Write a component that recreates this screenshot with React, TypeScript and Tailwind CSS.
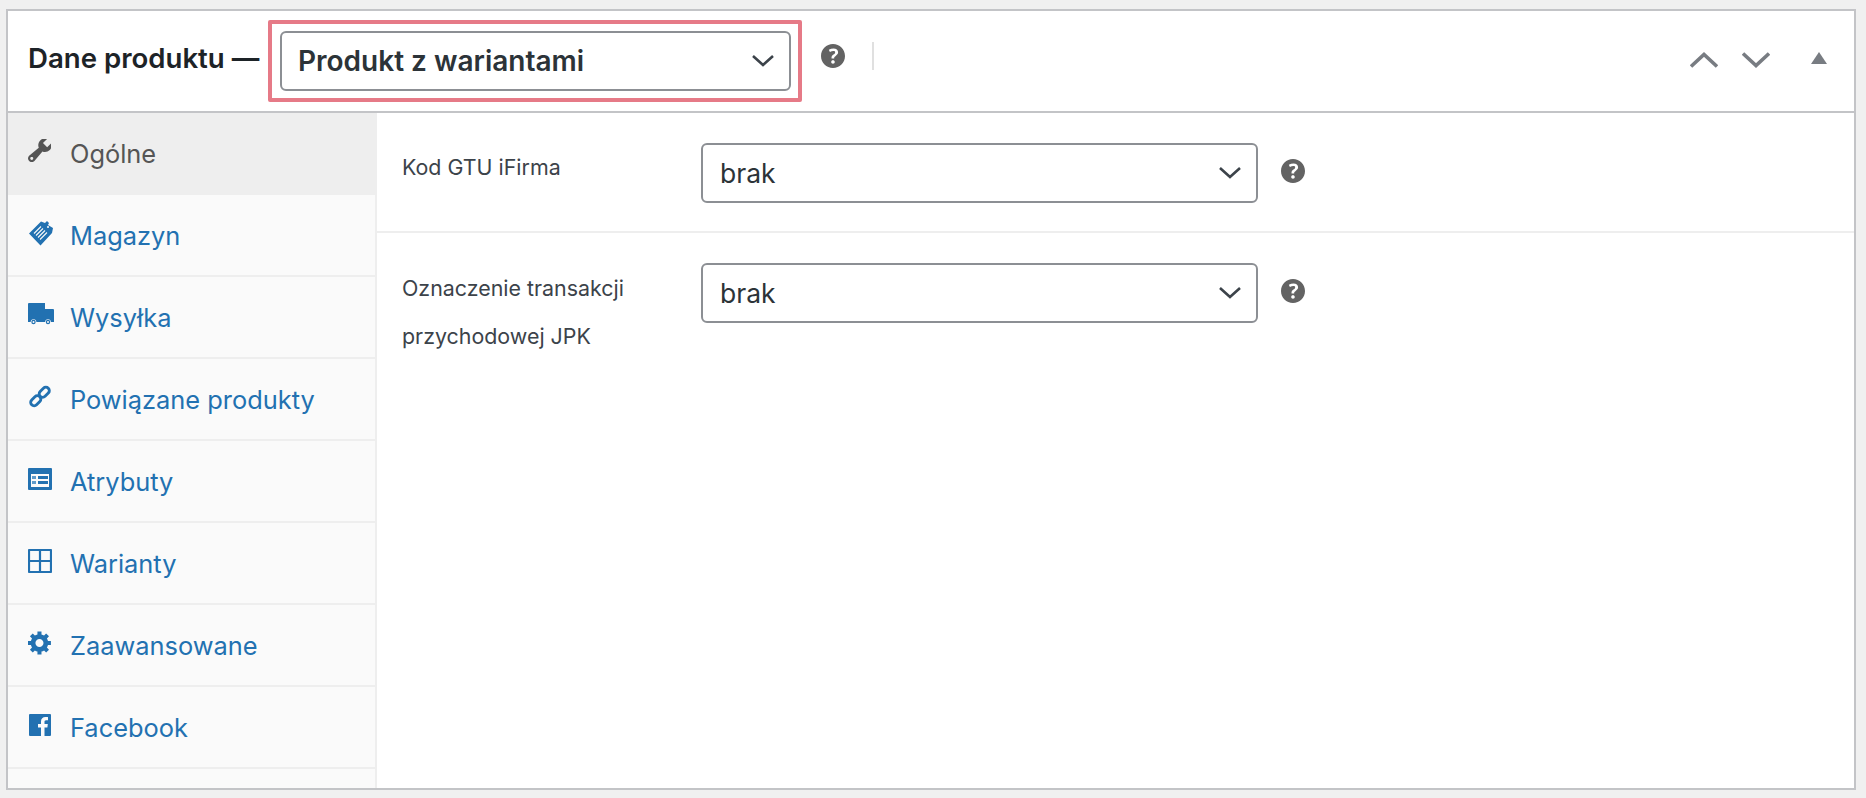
import React from "react";

const font = { fontFamily: "Inter, 'Noto Sans', sans-serif" };

function HelpIcon({ className = "" }: { className?: string }) {
  return (
    <svg viewBox="3 3 14 14" className={`w-[24px] h-[24px] ${className}`} fill="#636363">
      <path d="M17 10c0-3.87-3.14-7-7-7-3.87 0-7 3.13-7 7s3.13 7 7 7c3.86 0 7-3.13 7-7zm-6.3 1.48H9.14v-.43c0-.38.08-.7.24-.98s.46-.57.88-.89c.41-.29.68-.53.81-.71.14-.18.2-.39.2-.62 0-.25-.09-.44-.28-.58-.19-.13-.45-.19-.79-.19-.58 0-1.25.19-2 .57l-.64-1.28c.87-.49 1.8-.74 2.77-.74.81 0 1.45.2 1.92.58.48.39.71.91.71 1.55 0 .43-.09.8-.29 1.11-.19.32-.57.67-1.11 1.06-.38.28-.61.49-.71.63-.1.15-.15.34-.15.57v.35zm-1.47 2.74c-.18-.18-.27-.42-.27-.73 0-.33.08-.58.26-.75s.43-.25.77-.25c.32 0 .57.09.75.26s.27.42.27.74c0 .3-.09.54-.27.72-.18.18-.43.27-.75.27-.33 0-.58-.09-.76-.26z" />
    </svg>
  );
}

function Chevron({ up = false, color = "#50575e", w = 22, h = 13, sw = 2.6 }: { up?: boolean; color?: string; w?: number; h?: number; sw?: number }) {
  return (
    <svg width={w} height={h} viewBox={`0 0 ${w} ${h}`} fill="none" stroke={color} strokeWidth={sw}>
      {up ? (
        <path d={`M1 ${h - 1.5} L${w / 2} 2.5 L${w - 1} ${h - 1.5}`} />
      ) : (
        <path d={`M1 1.5 L${w / 2} ${h - 2.5} L${w - 1} 1.5`} />
      )}
    </svg>
  );
}

function Select({ value, bold = false }: { value: string; bold?: boolean }) {
  return (
    <div className="relative w-full h-full">
      <select
        defaultValue={value}
        style={font}
        className={`appearance-none w-full h-full bg-white border-2 border-[#8c8f94] rounded-[6px] text-[#2c3338] outline-none ${
          bold ? "font-semibold text-[28px] pb-[1px] pl-[16px]" : "text-[26.5px] pl-[17px] pt-[1px]"
        }`}
      >
        <option>{value}</option>
      </select>
      <div className="absolute right-[17px] top-1/2 -translate-y-1/2 pointer-events-none flex">
        <Chevron w={22} h={13} sw={2.6} color="#3c434a" />
      </div>
    </div>
  );
}

const icons: Record<string, React.ReactNode> = {
  wrench: (
    <svg width="23" height="23" viewBox="2 2.4 15.5 15.5" fill="currentColor">
      <path d="M16.68 9.77c-1.34 1.34-3.3 1.67-4.95.99l-5.41 6.52c-.99.99-2.59.99-3.58 0s-.99-2.59 0-3.57l6.52-5.42c-.68-1.65-.35-3.61.99-4.95 1.28-1.28 3.12-1.62 4.72-1.06l-2.89 2.89 2.82 2.82 2.86-2.87c.53 1.58.18 3.39-1.08 4.67zM3.81 16.21c.4.39 1.04.39 1.43 0 .4-.4.4-1.04 0-1.43-.39-.4-1.03-.4-1.43 0-.39.39-.39 1.03 0 1.43z" />
    </svg>
  ),
  tag: (
    <svg width="26" height="26" viewBox="0 0 26 26">
      <path fill="currentColor" d="M1 13.5 L13 1.5 L17 3 L19 1 L21 3 L20 5 L25 8 L24 13 L12.5 25.5 Z" />
      <g stroke="#fafafa" strokeWidth="1.1">
        <path d="M6 13.5 L13 6.5" />
        <path d="M8 15.5 L15 8.5" />
        <path d="M10 17.5 L17 10.5" />
        <path d="M12 19.5 L19 12.5" />
      </g>
      <circle cx="20" cy="7" r="1" fill="#fafafa" />
    </svg>
  ),
  truck: (
    <svg width="26" height="23" viewBox="0 0 26 23">
      <path fill="currentColor" d="M0 1 a1 1 0 0 1 1-1 H17 V6 H25 a1 1 0 0 1 1 1 V19 H0 Z" />
      <circle cx="5.5" cy="19" r="2.8" fill="#fafafa" />
      <circle cx="20" cy="19" r="2.8" fill="#fafafa" />
      <circle cx="5.5" cy="19" r="2.2" fill="currentColor" />
      <circle cx="5.5" cy="19" r="1" fill="#fafafa" />
      <circle cx="20" cy="19" r="2.2" fill="currentColor" />
      <circle cx="20" cy="19" r="1" fill="#fafafa" />
    </svg>
  ),
  link: (
    <svg width="24" height="23" viewBox="0 0 24 24" fill="none" stroke="currentColor" strokeWidth="3">
      <rect x="-6.6" y="-3.6" width="12" height="7.2" rx="3.6" transform="translate(8 16) rotate(-45)" />
      <rect x="-5.4" y="-3.6" width="12" height="7.2" rx="3.6" transform="translate(16 8) rotate(-45)" />
    </svg>
  ),
  attrs: (
    <svg width="24" height="22" viewBox="0 0 24 22">
      <rect width="24" height="22" rx="1" fill="currentColor" />
      <rect x="3" y="6" width="18" height="13" fill="#fafafa" />
      <rect x="4" y="8" width="4" height="3" fill="#5f9bcb" />
      <rect x="4" y="13" width="4" height="3" fill="#5f9bcb" />
      <rect x="10" y="8" width="10" height="3" fill="currentColor" />
      <rect x="10" y="13" width="10" height="3" fill="currentColor" />
    </svg>
  ),
  grid: (
    <svg width="24" height="24" viewBox="0 0 24 24" fill="none" stroke="currentColor" strokeWidth="2.2">
      <rect x="1" y="1" width="22" height="22" rx="0.5" />
      <path d="M12 1 V23 M1 12 H23" />
    </svg>
  ),
  gear: (
    <svg width="24" height="24" viewBox="1 1.6 17.8 17.8" fill="currentColor">
      <path d="M18 12h-2.18c-.17.7-.44 1.35-.81 1.93l1.54 1.54-2.1 2.1-1.54-1.54c-.58.36-1.23.63-1.91.79V19H8v-2.18c-.68-.16-1.33-.43-1.91-.79l-1.54 1.54-2.12-2.12 1.54-1.54c-.36-.58-.63-1.23-.79-1.91H1V9.03h2.17c.16-.7.44-1.35.8-1.94L2.43 5.55l2.1-2.1 1.54 1.54c.58-.37 1.24-.64 1.93-.81V2h3v2.18c.68.16 1.33.43 1.91.79l1.54-1.54 2.12 2.12-1.54 1.54c.36.59.64 1.24.8 1.94H18V12zm-8.5 1.5c1.66 0 3-1.34 3-3s-1.34-3-3-3-3 1.34-3 3 1.34 3 3 3z" />
    </svg>
  ),
  fb: (
    <svg width="22" height="22" viewBox="0 0 22 22" className="ml-[1px]">
      <path fill="currentColor" d="M1 0 H21 a1 1 0 0 1 1 1 V21 a1 1 0 0 1-1 1 H15.5 V13.5 H18.4 L18.8 10 H15.5 V8 c0-1 .3-1.7 1.7-1.7 H19 V3.2 c-.4 0-1.4-.1-2.6-.1 -2.6 0-4.4 1.6-4.4 4.5 V10 H9 V13.5 H12 V22 H1 a1 1 0 0 1-1-1 V1 a1 1 0 0 1 1-1 Z" />
    </svg>
  ),
};

const tabs = [
  { label: "Ogólne", icon: "wrench", active: true },
  { label: "Magazyn", icon: "tag" },
  { label: "Wysyłka", icon: "truck" },
  { label: "Powiązane produkty", icon: "link" },
  { label: "Atrybuty", icon: "attrs" },
  { label: "Warianty", icon: "grid" },
  { label: "Zaawansowane", icon: "gear" },
  { label: "Facebook", icon: "fb" },
];

export default function App() {
  return (
    <div className="w-[1866px] h-[798px] bg-[#f0f0f0] pt-[9px] pl-[6px] pr-[10px] antialiased" style={font}>
      <div className="w-[1850px] h-[781px] bg-white border-2 border-[#c3c4c7] flex flex-col">
        {/* HEADER */}
        <div className="h-[102px] shrink-0 border-b-2 border-[#c3c4c7] flex items-center pb-[3px]">
          <h2 className="ml-[20px] text-[27.6px] font-semibold text-[#1d2327] whitespace-nowrap w-[240px] -mt-[1px]">Dane produktu —</h2>
          <div className="w-[534px] h-[82px] border-4 border-[#e67a87] rounded-[2px] pt-[7px] pb-[7px] pl-[8px] pr-[7px] mt-[3px]">
            <Select value="Produkt z wariantami" bold />
          </div>
          <HelpIcon className="ml-[19px] -mt-[8px]" />
          <div className="w-[2px] h-[28px] bg-[#e0e0e0] ml-[27px] -mt-[8px]" />
          <div className="ml-auto flex items-center mr-[27px]">
            <Chevron up color="#787c82" w={28} h={16} sw={3.6} />
            <div className="w-[24px]" />
            <Chevron color="#787c82" w={28} h={16} sw={3.6} />
            <div className="w-[4px]" />
            <svg width="16" height="12" viewBox="0 0 16 12" fill="#787c82" className="ml-[37px] -mt-[3px]">
              <path d="M8 0 L16 12 H0 Z" />
            </svg>
          </div>
        </div>

        {/* BODY */}
        <div className="flex flex-1 min-h-0">
          <div className="w-[369px] shrink-0 bg-[#fafafa] border-r-2 border-[#eeeeee]">
            {tabs.map((t) => (
              <div
                key={t.label}
                className={`h-[82px] border-b-2 flex items-center ${
                  t.active ? "bg-[#eeeeee] border-[#eeeeee] text-[#555555]" : "border-[#eeeeee] text-[#2271b1]"
                }`}
              >
                <div className="w-[62px] pl-[20px] -mt-[5px] flex items-center h-[26px] shrink-0">{icons[t.icon]}</div>
                <span className="text-[25.4px] whitespace-nowrap mt-[3px]">{t.label}</span>
              </div>
            ))}
          </div>

          <div className="flex-1 bg-white">
            <div className="h-[120px] border-b-2 border-[#eeeeee] flex pt-[30px] pl-[25px]">
              <div className="w-[299px] text-[21.4px] leading-[48px] text-[#3c434a]">Kod GTU iFirma</div>
              <div className="w-[557px] h-[60px]">
                <Select value="brak" />
              </div>
              <HelpIcon className="ml-[23px] mt-[16px]" />
            </div>
            <div className="flex pt-[30px] pl-[25px]">
              <div className="w-[299px] text-[21.4px] leading-[48px] pt-[1px] text-[#3c434a]">
                Oznaczenie transakcji
                <br />
                przychodowej JPK
              </div>
              <div className="w-[557px] h-[60px]">
                <Select value="brak" />
              </div>
              <HelpIcon className="ml-[23px] mt-[16px]" />
            </div>
          </div>
        </div>
      </div>
    </div>
  );
}
